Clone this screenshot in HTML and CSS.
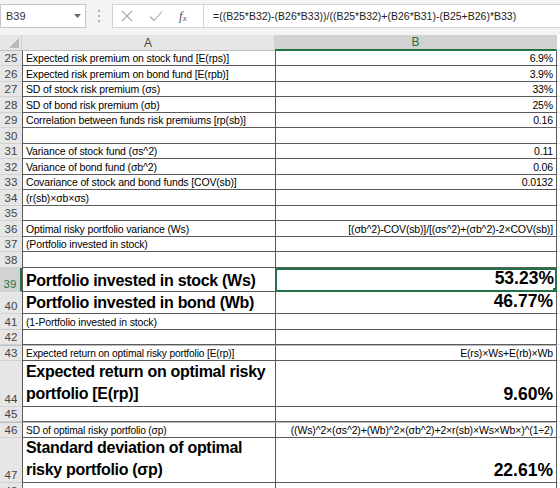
FILE: index.html
```html
<!DOCTYPE html>
<html lang="en">
<head>
    <meta charset="UTF-8">
    <title>Optimal risky portfolio</title>
    <link rel="stylesheet" href="styles.css">
</head>
<body>

    <div class="topbar">
        <div class="namebox">
            <span>B39</span>
            <svg width="7" height="4" viewBox="0 0 7 4"><path d="M0 0h7L3.5 4z" fill="#6a6a6a"/></svg>
        </div>
        <div class="grip">
            <svg width="2" height="12" viewBox="0 0 2 12"><path d="M0 1h2M0 6h2M0 11h2" stroke="#b0b0b0" stroke-width="2"/></svg>
        </div>
        <div class="fx-tools">
            <svg width="12" height="12" viewBox="0 0 12 12"><path d="M1 1l10 10M11 1L1 11" stroke="#a8a8a8" stroke-width="1.1" fill="none"/></svg>
            <svg width="14" height="12" viewBox="0 0 14 12"><path d="M1 6.5l4 4L13 1.5" stroke="#a8a8a8" stroke-width="1.1" fill="none"/></svg>
            <span class="fx">f<sub>x</sub></span>
        </div>
        <div class="formula">=((B25*B32)-(B26*B33))/((B25*B32)+(B26*B31)-(B25+B26)*B33)</div>
    </div>

    <div class="sheet">
        <div class="row head">
            <div class="corner"><svg width="10" height="10" viewBox="0 0 10 10"><path d="M10 0v10H0z" fill="#b9b9b9"/></svg></div>
            <div class="col">A</div>
            <div class="col active">B</div>
            <div class="rest"></div>
        </div>

        <div class="row h15"><div class="rh">25</div><div class="a">Expected risk premium on stock fund [E(rps)]</div><div class="b">6.9%</div><div class="rest"></div></div>
        <div class="row h16"><div class="rh">26</div><div class="a">Expected risk premium on bond fund [E(rpb)]</div><div class="b">3.9%</div><div class="rest"></div></div>
        <div class="row h15"><div class="rh">27</div><div class="a">SD of stock risk premium (σs)</div><div class="b">33%</div><div class="rest"></div></div>
        <div class="row h16"><div class="rh">28</div><div class="a">SD of bond risk premium (σb)</div><div class="b">25%</div><div class="rest"></div></div>
        <div class="row h15"><div class="rh">29</div><div class="a">Correlation between funds risk premiums [rp(sb)]</div><div class="b">0.16</div><div class="rest"></div></div>
        <div class="row h16"><div class="rh">30</div><div class="a"></div><div class="b"></div><div class="rest"></div></div>
        <div class="row h15"><div class="rh">31</div><div class="a">Variance of stock fund (σs^2)</div><div class="b">0.11</div><div class="rest"></div></div>
        <div class="row h16"><div class="rh">32</div><div class="a">Variance of bond fund (σb^2)</div><div class="b">0.06</div><div class="rest"></div></div>
        <div class="row h15"><div class="rh">33</div><div class="a">Covariance of stock and bond funds [COV(sb)]</div><div class="b">0.0132</div><div class="rest"></div></div>
        <div class="row h16"><div class="rh">34</div><div class="a">(r(sb)×σb×σs)</div><div class="b"></div><div class="rest"></div></div>
        <div class="row h15"><div class="rh">35</div><div class="a"></div><div class="b"></div><div class="rest"></div></div>
        <div class="row h16"><div class="rh">36</div><div class="a">Optimal risky portfolio variance (Ws)</div><div class="b">[(σb^2)-COV(sb)]/[(σs^2)+(σb^2)-2×COV(sb)]</div><div class="rest"></div></div>
        <div class="row h15"><div class="rh">37</div><div class="a">(Portfolio invested in stock)</div><div class="b"></div><div class="rest"></div></div>
        <div class="row h16"><div class="rh">38</div><div class="a"></div><div class="b"></div><div class="rest"></div></div>

        <div class="row h24 big"><div class="rh current">39</div><div class="a">Portfolio invested in stock (Ws)</div><div class="b selected">53.23%<span class="handle"></span></div><div class="rest"></div></div>
        <div class="row h22 big"><div class="rh">40</div><div class="a">Portfolio invested in bond (Wb)</div><div class="b">46.77%</div><div class="rest"></div></div>
        <div class="row h16"><div class="rh">41</div><div class="a">(1-Portfolio invested in stock)</div><div class="b"></div><div class="rest"></div></div>
        <div class="row h15"><div class="rh">42</div><div class="a"></div><div class="b"></div><div class="rest"></div></div>
        <div class="row h16 small split"><div class="rh">43</div><div class="a">Expected return on optimal risky portfolio [E(rp)]</div><div class="b">E(rs)×Ws+E(rb)×Wb</div><div class="rest"></div></div>
        <div class="row h46 big wrap"><div class="rh">44</div><div class="a">Expected return on optimal risky portfolio [E(rp)]</div><div class="b">9.60%</div><div class="rest"></div></div>
        <div class="row h15"><div class="rh">45</div><div class="a"></div><div class="b"></div><div class="rest"></div></div>
        <div class="row h16 small split"><div class="rh">46</div><div class="a">SD of optimal risky portfolio (σp)</div><div class="b">((Ws)^2×(σs^2)+(Wb)^2×(σb^2)+2×r(sb)×Ws×Wb×)^(1÷2)</div><div class="rest"></div></div>
        <div class="row h45 big wrap"><div class="rh">47</div><div class="a">Standard deviation of optimal risky portfolio (σp)</div><div class="b">22.61%</div><div class="rest"></div></div>
        <div class="row h16"><div class="rh">48</div><div class="a"></div><div class="b"></div><div class="rest"></div></div>
    </div>

</body>
</html>
```

FILE: styles.css
```css
body {
    margin: 0;
    width: 560px;
    height: 488px;
    overflow: hidden;
    background-color: #f3f3f3;
    font-family: 'Liberation Sans', Arial, sans-serif;
    color: #000;
}

/* formula bar */

.topbar {
    display: flex;
    align-items: center;
    height: 31px;
    margin-bottom: 4px;
    background-color: #f3f3f3;
}

.namebox {
    width: 86px;
    height: 24px;
    box-sizing: border-box;
    display: flex;
    align-items: center;
    justify-content: space-between;
    padding: 0 4px 0 5px;
    background: white;
    border: 1px solid #c6c6c6;
    font-size: 11px;
    color: #333;
}

.grip {
    width: 26px;
    display: flex;
    justify-content: center;
}

.fx-tools {
    width: 91px;
    height: 24px;
    box-sizing: border-box;
    display: flex;
    align-items: center;
    gap: 16px;
    padding-left: 8px;
    background: white;
    border: 1px solid #d4d4d4;
    border-right: none;
}

.fx {
    font-family: 'Liberation Serif', serif;
    font-style: italic;
    font-size: 13px;
    color: #555;
}

.fx sub {
    font-size: 9px;
    vertical-align: -1px;
}

.formula {
    flex: 1;
    height: 24px;
    box-sizing: border-box;
    display: flex;
    align-items: center;
    padding-left: 9px;
    background: white;
    border: 1px solid #d4d4d4;
    border-right: none;
    font-size: 10.5px;
    color: #222;
    white-space: nowrap;
}

/* sheet grid */

.sheet {
    background: white;
}

.row {
    display: grid;
    grid-template-columns: 22px 253px 282px 3px;
    font-size: 10.5px;
    letter-spacing: -0.15px;
}

.row > div {
    box-sizing: border-box;
    border-bottom: 1px solid #5a5a5a;
    display: flex;
    align-items: flex-end;
    white-space: nowrap;
    overflow: hidden;
}

.h15 { height: 15px; }
.h16 { height: 16px; }
.h22 { height: 22px; }
.h24 { height: 24px; }
.h45 { height: 45px; }
.h46 { height: 46px; }

.head {
    height: 16px;
    letter-spacing: 0;
}

.head > div {
    background: #e6e6e6;
    border-bottom: 1px solid #bdbdbd;
    align-items: center;
    justify-content: center;
    font-size: 12px;
    color: #444;
}

.head .corner {
    justify-content: flex-end;
    align-items: flex-end;
    padding: 0 2px 2px 0;
    border-right: 1px solid #cfcfcf;
}

.head .col {
    border-right: 1px solid #cfcfcf;
}

.head .active {
    background: #d2d2d2;
    color: #217346;
    border-bottom: 2px solid #217346;
}

.head .rest {
    background: #e6e6e6;
}

.row > .rh {
    background: #e6e6e6;
    border-bottom: 1px solid #d2d2d2;
    justify-content: center;
    padding-bottom: 1px;
    font-size: 11.5px;
    letter-spacing: 0;
    color: #444;
}

.row > .rh.current {
    background: #d2d2d2;
    color: #217346;
    border-right: 2px solid #217346;
}

.row > .a {
    border-left: 1px solid #5a5a5a;
    padding: 0 0 1px 3px;
}

.row > .b {
    border-left: 1px solid #5a5a5a;
    border-right: 1px solid #5a5a5a;
    justify-content: flex-end;
    padding: 0 3px 1px 0;
}

.row > .rest {
    background: white;
    border-bottom: 1px solid #e2e2e2;
}

.small .a {
    font-size: 10.2px;
}

.small .b {
    font-size: 10.5px;
}

.split > .a,
.split > .b,
.split > .rh {
    border-top: 1px solid #bdbdbd;
}

.big .a {
    font-size: 16px;
    letter-spacing: -0.3px;
    font-weight: bold;
}

.big .b {
    font-size: 17.5px;
    letter-spacing: 0;
    font-weight: bold;
}

.wrap .a {
    white-space: normal;
    line-height: 22px;
}

.big .b.selected {
    position: relative;
    border: 2px solid #217346;
    padding-right: 1px;
}

.handle {
    position: absolute;
    right: -4px;
    bottom: -4px;
    width: 5px;
    height: 5px;
    background: #217346;
    border: 1px solid white;
}
```
